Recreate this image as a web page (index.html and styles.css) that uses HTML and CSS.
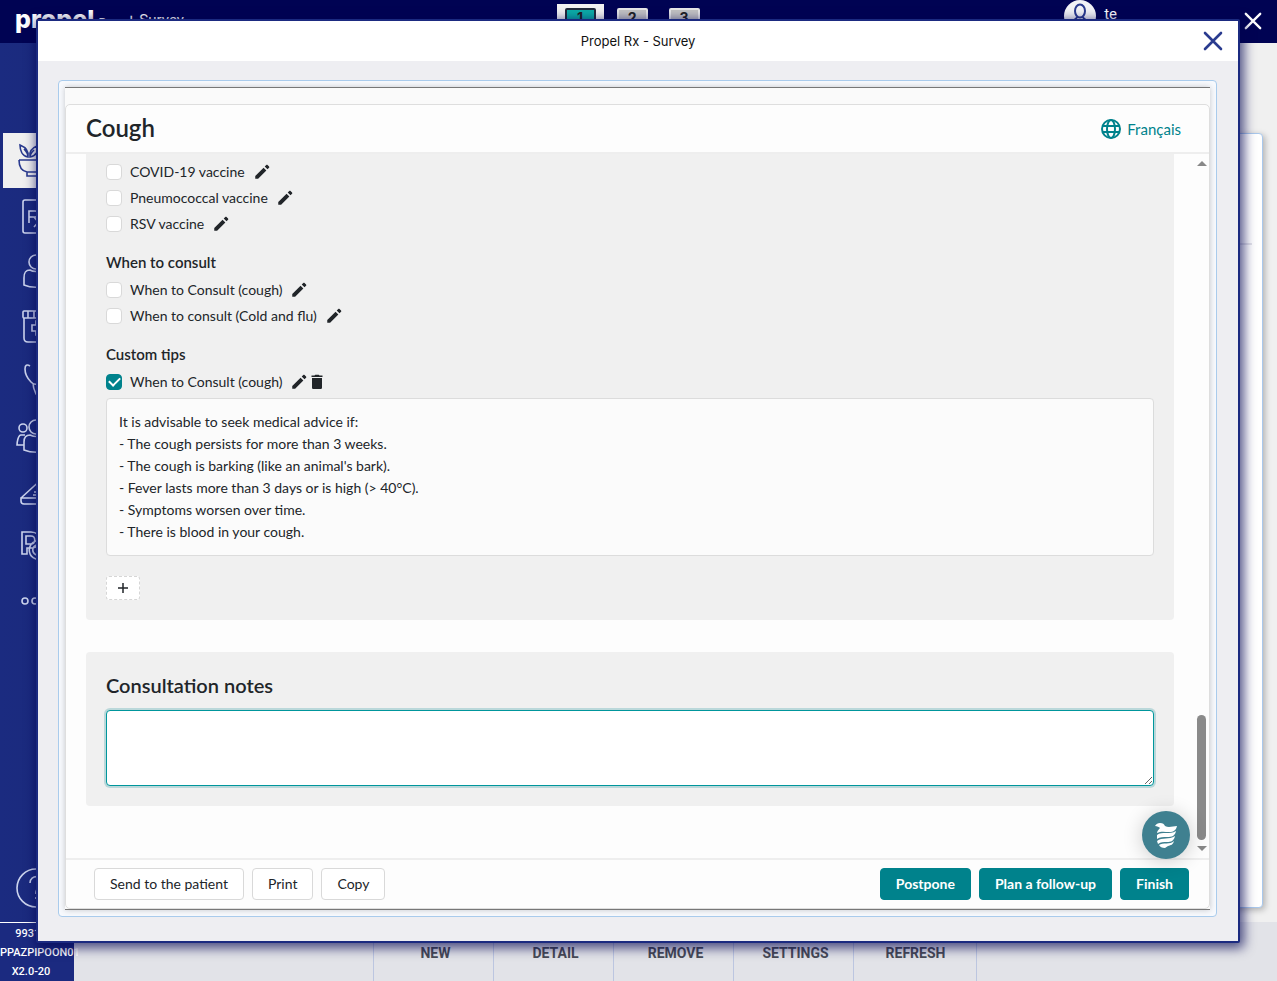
FILE: index.html
```html
<!DOCTYPE html>
<html lang="en">
<head>
<meta charset="utf-8">
<title>Propel Rx - Survey</title>
<link rel="stylesheet" href="styles.css">
</head>
<body>
<svg class="defs" aria-hidden="true">
  <symbol id="pencil" viewBox="0 0 24 24"><path d="M3 17.2V21h3.8L17.8 9.900l-3.700-3.700L3 17.200zM21.400 6.300c.5-.5.5-1.200 0-1.700l-2-2c-.5-.5-1.200-.5-1.700 0l-2.100 2.100 3.700 3.700 2.100-2.100z"/></symbol>
  <symbol id="cross" viewBox="0 0 20 20"><path d="M2 2l16 16M18 2L2 18" fill="none" stroke="currentColor" stroke-width="2.600" stroke-linecap="round"/></symbol>
</svg>
<div class="app">
  <header class="topbar">
    <div class="brand"><span class="logo">propel</span><span class="rx">Rx</span><span class="crumb">+ Survey</span></div>
    <nav class="tabs">
      <button class="tab active"><span>1</span></button>
      <button class="tab"><span>2</span></button>
      <button class="tab"><span>3</span></button>
    </nav>
    <div class="user">
      <span class="avatar"><svg viewBox="0 0 32 32" width="32" height="32"><ellipse cx="16" cy="11" rx="5" ry="6.500"/><path d="M13 17c0 3-7 3-7 9M19 17c0 3 7 3 7 9"/></svg></span>
      <span>te</span>
    </div>
    <button class="app-close" aria-label="Close application"><svg width="18" height="18"><use href="#cross"/></svg></button>
  </header>
  <div class="workspace">
    <nav class="sidebar">
      <a class="side on" href="#" aria-label="Pharmacy"><svg viewBox="0 0 40 40"><path d="M5 19h32M5 19c0 7 3 11 8 12v4h15v-4c6-1 9-5 9-12M13 31h15M14 16C8 15 6 9 6 4c5 2 9 6 8 12zM16 16c-1-5 2-9 7-11 2 5-1 10-7 11zM14 16c0-3-2-6-4-8M16 16c0-3 2-5 4-7"/></svg></a>
      <a class="side" href="#" aria-label="Prescriptions"><svg viewBox="0 0 40 40"><rect x="9" y="4" width="27" height="33" rx="2"/><path d="M15 27V15h6c5 0 5 6 0 6h-6M20 21l9 11M28 22l-8 9"/></svg></a>
      <a class="side" href="#" aria-label="Patients"><svg viewBox="0 0 40 40"><circle cx="22" cy="11" r="7"/><path d="M16 19c-5 0-6 3-6 8v7c7 3 17 3 24 0v-7c0-5-1-8-6-8-3 2-9 2-12 0z"/></svg></a>
      <a class="side" href="#" aria-label="Drugs"><svg viewBox="0 0 40 40"><rect x="9" y="5" width="27" height="7" rx="1"/><path d="M14 5v7M20 5v7M26 5v7M10 12v20c0 3 2 4 4 4h20V12M26 15h-4v4h-4v6h4v4h4"/></svg></a>
      <a class="side" href="#" aria-label="Doctors"><svg viewBox="0 0 40 40"><path d="M16 5c-3-2-5-1-5 3 0 5 2 9 6 13 2 2 5 3 7 1 5-3 8-9 8-14 0-4-2-5-5-3M19 22c0 5 2 9 3 11 2 4 6 4 8 2"/></svg></a>
      <a class="side" href="#" aria-label="Groups"><svg viewBox="0 0 40 40"><circle cx="9" cy="12" r="4"/><circle cx="22" cy="11" r="7"/><path d="M16 19c-4 0-6 3-6 7v8c7 3 19 3 26 0v-8c0-4-2-7-6-7-4 2-10 2-14 0zM11 19H7c-3 0-4 8-4 10h7"/></svg></a>
      <a class="side" href="#" aria-label="Workflow"><svg viewBox="0 0 40 40"><path d="M7 27L30 6v21H7v3c0 2 1 3 3 3h25M19 24h11M20 21h10M22 18h8M24 15h6"/></svg></a>
      <a class="side" href="#" aria-label="Portal"><svg viewBox="0 0 40 40"><path d="M8 28V6h9c12 0 11 16 1 16h-5v6zM12 18V10h5c5 0 5 8 0 8zM31 14c-21-3-21 23 0 20M30 18c-15-2-15 14 0 12"/></svg></a>
      <a class="side" href="#" aria-label="More"><svg viewBox="0 0 40 40"><circle cx="11" cy="20" r="3"/><circle cx="21" cy="20" r="3"/><circle cx="31" cy="20" r="3"/></svg></a>
      <a class="side help" href="#" aria-label="Help"><svg viewBox="0 0 40 40"><circle cx="20" cy="20" r="19"/><path d="M14 15c0-9 14-8 12 0-1 4-6 4-6 9v2M20 29v2"/></svg></a>
    </nav>
    <main class="stage"><div class="stage-card"><hr></div></main>
  </div>
  <footer class="bottombar">
    <div class="station"><span>99311</span><span>PPAZPIPOON01</span><span>X2.0-20</span></div>
    <div class="actions">
      <span class="filler"></span>
      <button>NEW</button><button>DETAIL</button><button>REMOVE</button><button>SETTINGS</button><button>REFRESH</button>
    </div>
  </footer>
</div>

<div class="modal" role="dialog" aria-labelledby="modal-title">
  <div class="modal-head">
    <span id="modal-title">Propel Rx - Survey</span>
    <button class="modal-close" aria-label="Close"><svg width="20" height="20"><use href="#cross"/></svg></button>
  </div>
  <div class="modal-body">
    <div class="frame">
      <div class="viewport">
        <section class="card">
          <header class="card-head">
            <h1>Cough</h1>
            <a class="lang" href="#"><svg viewBox="0 0 20 20" width="20" height="20"><circle cx="10" cy="10" r="9"/><ellipse cx="10" cy="10" rx="4" ry="9"/><path d="M1.500 7h17M1.500 13h17"/></svg>Français</a>
          </header>
          <div class="scroller">
            <div class="content">
              <section class="panel tips">
                <div class="tip"><label><input type="checkbox"><span>COVID-19 vaccine</span></label><button class="icon" aria-label="Edit"><svg width="18" height="18"><use href="#pencil"/></svg></button></div>
                <div class="tip"><label><input type="checkbox"><span>Pneumococcal vaccine</span></label><button class="icon" aria-label="Edit"><svg width="18" height="18"><use href="#pencil"/></svg></button></div>
                <div class="tip"><label><input type="checkbox"><span>RSV vaccine</span></label><button class="icon" aria-label="Edit"><svg width="18" height="18"><use href="#pencil"/></svg></button></div>
                <h3>When to consult</h3>
                <div class="tip"><label><input type="checkbox"><span>When to Consult (cough)</span></label><button class="icon" aria-label="Edit"><svg width="18" height="18"><use href="#pencil"/></svg></button></div>
                <div class="tip"><label><input type="checkbox"><span>When to consult (Cold and flu)</span></label><button class="icon" aria-label="Edit"><svg width="18" height="18"><use href="#pencil"/></svg></button></div>
                <h3>Custom tips</h3>
                <div class="tip"><label><input type="checkbox" checked><span>When to Consult (cough)</span></label><button class="icon" aria-label="Edit"><svg width="18" height="18"><use href="#pencil"/></svg></button><button class="icon" aria-label="Delete"><svg width="18" height="18" viewBox="0 0 18 18"><path d="M4 5h10v9.500c0 1-.7 1.500-1.500 1.500h-7C4.700 16 4 15.500 4 14.500zM3.500 2.500H6.500L7.300 1.800h3.400l.8.700h3V4h-11z"/></svg></button></div>
                <div class="advice">It is advisable to seek medical advice if:<br>- The cough persists for more than 3 weeks.<br>- The cough is barking (like an animal's bark).<br>- Fever lasts more than 3 days or is high (&gt; 40°C).<br>- Symptoms worsen over time.<br>- There is blood in your cough.</div>
                <button class="add" aria-label="Add a tip"><svg width="12" height="12" viewBox="0 0 12 12"><path d="M6 1v10M1 6h10"/></svg></button>
              </section>
              <section class="panel notes">
                <h2><label for="notes">Consultation notes</label></h2>
                <textarea id="notes"></textarea>
              </section>
            </div>
            <div class="track" aria-hidden="true"><i class="up"></i><i class="thumb"></i><i class="down"></i></div>
          </div>
          <footer class="card-foot">
            <button class="btn">Send to the patient</button>
            <button class="btn">Print</button>
            <button class="btn">Copy</button>
            <button class="btn primary first">Postpone</button>
            <button class="btn primary">Plan a follow-up</button>
            <button class="btn primary">Finish</button>
          </footer>
          <button class="fab" aria-label="Assistant"><svg viewBox="0 0 48 48" width="48" height="48"><path d="M13 15c1-2 3-3 5-3 3 0 4 1 5 3 4 2 8 0 12 0-1 4-3 6-8 6-4 0-8-1-12 1 0-2 2-4 3-5-1-1-3-2-5-2z"/><path d="M15 24c5-4 13 0 19-4-1 5-4 6-9 6-4 0-7 0-10 2zM15 30c5-4 12-1 18-5-1 5-4 6-8 6-4 0-6 0-9 2zM17 34c4-3 11 0 15-4-1 4-3 4-6 5l-3 2c-3 0-5-1-6-3z"/></svg></button>
        </section>
      </div>
    </div>
  </div>
</div>
</body>
</html>
```
FILE: styles.css
```css
* { box-sizing: border-box; }
body { margin: 0; height: 100vh; overflow: hidden; font-family: Lato, "Liberation Sans", sans-serif; font-size: 14px; color: #212529; }
button { font: inherit; color: inherit; margin: 0; padding: 0; border: 0; background: none; cursor: pointer; }
a { text-decoration: none; }
.defs { position: absolute; width: 0; height: 0; }

/* application behind the dialog */
.app { height: 100%; display: flex; flex-direction: column; background: #f0f0f0; }
.topbar { height: 43px; flex: none; background: #000353; color: #fff; display: flex; align-items: flex-start; padding: 0 15px; }
.brand { flex: 1; display: flex; align-items: center; height: 40px; white-space: nowrap; }
.logo { font-family: Inter, sans-serif; font-weight: 800; font-size: 25px; line-height: 30px; padding-bottom: 2px; }
.rx { font-family: "Open Sans", sans-serif; font-size: 13px; margin: 4px 14px 0 4px; }
.crumb { font-family: Roboto, sans-serif; font-size: 15px; }
.tabs { flex: 1; display: flex; gap: 5px; padding-top: 4px; margin-left: -22px; margin-right: -56px; }
.tab { width: 47px; padding: 4px 8px; height: 34px; }
.tab span { display: block; height: 26px; background: #c4c4c4; border: 2px solid #e8e8e8; border-radius: 2px; color: #222; font: 700 14px/16px Inter, sans-serif; }
.tab.active { background: #f2f2f2; }
.tab.active span { background: #0cada8; border-color: #222a3a; }
.user { display: flex; gap: 8px; font: 15px/28px Roboto, sans-serif; margin-right: 127px; }
.avatar { width: 32px; height: 32px; border-radius: 50%; background: #f2f3f7; }
.avatar svg { fill: none; stroke: #2a3b8f; stroke-width: 2; display: block; }
.app-close { margin-top: 12px; height: 18px; }
.app-close svg { display: block; }
.workspace { flex: 1; min-height: 0; display: flex; }
.sidebar { width: 74px; flex: none; background: linear-gradient(90deg, #1b2b80, #1b2a7c); display: flex; flex-direction: column; padding: 90px 0 6px 3px; }
.side { height: 55px; padding: 8px 0 0 11px; color: #ccd4ee; }
.side svg { display: block; width: 40px; height: 40px; fill: none; stroke: currentColor; stroke-width: 1.6; }
.side.on { background: #f0f0f0; color: #2a3b8f; }
.side.help { margin-top: auto; height: 48px; padding: 0 0 0 13px; }
.stage { flex: 1; padding: 90px 14px 14px 12px; }
.stage-card { height: 100%; background: #fff; border: 1px solid #a9c8ec; border-radius: 4px; box-shadow: 2px 2px 6px #0004; padding: 109px 10px 0; }
.stage-card hr { border: 0; border-top: 2px solid #e4e4ea; margin: 0; }
.bottombar { height: 59px; flex: none; display: flex; background: #e2e3e8; }
.station { width: 74px; flex: none; background: #1b2a80; border-top: 1px solid #fff; color: #fff; display: flex; flex-direction: column; align-items: safe center; padding: 1px 12px 0 0; font: 500 11px/19px Roboto, sans-serif; }
.actions { flex: 1; display: flex; }
.actions .filler { width: 300px; border-right: 1px solid #bcc6e0; }
.actions button { width: 120px; padding: 3px 0 0 4px; border-right: 1px solid #bcc6e0; font: 700 14px/20px Roboto, "Liberation Sans", sans-serif; color: #484b55; }
.actions button:last-child { width: 123px; padding-left: 1px; }

/* dialog */
.modal { position: fixed; inset: 19px 37px 38px 36px; border: 2px solid #1b2a80; border-radius: 2px; background: #eeeef2; box-shadow: 2px 3px 12px 2px #00034fb0; display: flex; flex-direction: column; }
.modal-head { height: 40px; flex: none; background: #fff; display: grid; grid-template-columns: 1fr auto 1fr; align-items: center; padding-right: 15px; font: 13px Inter, sans-serif; color: #111; }
.modal-head span { grid-column: 2; padding-left: 15px; }
.modal-close { justify-self: end; color: #2a3b8f; height: 20px; }
.modal-close svg { display: block; }
.modal-body { flex: 1; min-height: 0; padding: 19px 21px 24px 20px; }
.frame { height: 100%; border: 1px solid #a9cbec; border-radius: 4px; background: #f7f9fd; padding: 6px; }
.viewport { height: 100%; border-top: 1px solid #777; border-bottom: 1px solid #777; background: #fafafa; padding-top: 16px; box-shadow: 0 0 6px #0003; }
.card { height: 100%; position: relative; border: 1px solid #dedede; border-radius: 5px; background: #fdfdfd; display: flex; flex-direction: column; }
.card-head { height: 49px; flex: none; border-bottom: 2px solid #eee; display: flex; align-items: center; justify-content: space-between; padding: 0 28px 0 20px; }
h1, h2, h3 { margin: 0; font-weight: 600; }
h1 { font-size: 24px; line-height: 28px; padding-bottom: 1px; }
.lang { display: flex; align-items: center; gap: 6px; font-size: 15px; color: #00828c; }
.lang svg { fill: none; stroke: currentColor; stroke-width: 2; }
.scroller { flex: 1; min-height: 0; display: flex; overflow: hidden; }
.content { flex: 1; padding: 0 20px; display: flex; flex-direction: column; gap: 32px; }
.panel { background: #f0f0f0; border-radius: 4px; padding: 20px; }
.tips { padding-top: 5px; border-radius: 0 0 4px 4px; }
.tip { display: flex; align-items: center; height: 26px; }
.tip label { display: flex; align-items: center; gap: 8px; margin-right: 8px; }
.tip label span { padding-bottom: 2px; }
.tip input { appearance: none; width: 16px; height: 16px; margin: 0; border: 1px solid #d9d9d9; border-radius: 4px; background: #fff; display: grid; place-items: center; }
.tip input:checked { background: #00828c; border-color: #00828c; }
.tip input:checked::after { content: ""; width: 9px; height: 5px; border: solid #fff; border-width: 0 0 2px 2px; rotate: -45deg; margin-bottom: 3px; }
.icon { width: 18px; height: 18px; }
.icon svg { display: block; fill: currentColor; }
h3 { font-size: 15px; line-height: 22px; margin: 14px 0 4px; }
.advice { margin-top: 3px; border: 1px solid #dcdcdc; border-radius: 4px; background: #fbfbfb; padding: 12px; line-height: 22px; }
.add { display: flex; align-items: center; justify-content: center; width: 34px; height: 24px; margin-top: 20px; border: 1px dashed #d6d6d6; border-radius: 3px; background: #fff; }
.add svg { stroke: currentColor; stroke-width: 1.5; }
h2 { font-size: 20px; line-height: 26px; margin-bottom: 12px; }
textarea { display: block; width: 100%; height: 76px; border: 1px solid #00969c; border-radius: 4px; background: #fff; box-shadow: 0 0 0 2px #00828c38; outline: 0; resize: vertical; }
.track { width: 15px; display: flex; flex-direction: column; align-items: center; padding: 7px 0 7px; }
.track i { flex: none; }
.up, .down { border: 5px solid transparent; }
.up { border-top: 0; border-bottom-color: #888; }
.down { border-bottom: 0; border-top-color: #888; }
.thumb { width: 9px; height: 125px; border-radius: 5px; background: #8a8a8a; margin: auto 0 6px; }
.card-foot { height: 50px; flex: none; border-top: 2px solid #eee; display: flex; gap: 8px; padding: 8px 20px 8px 28px; }
.btn { height: 32px; padding: 0 15px 2px; border: 1px solid #d9d9d9; border-radius: 4px; background: #fff; }
.btn.primary { border-color: #00828c; background: #00828c; color: #fff; font-weight: 700; }
.first { margin-left: auto; }
.fab { position: absolute; right: 19px; bottom: 49px; width: 48px; height: 48px; border-radius: 50%; background: #3f8090; box-shadow: 0 2px 20px #0003; }
.fab svg { display: block; fill: #fff; }
```
